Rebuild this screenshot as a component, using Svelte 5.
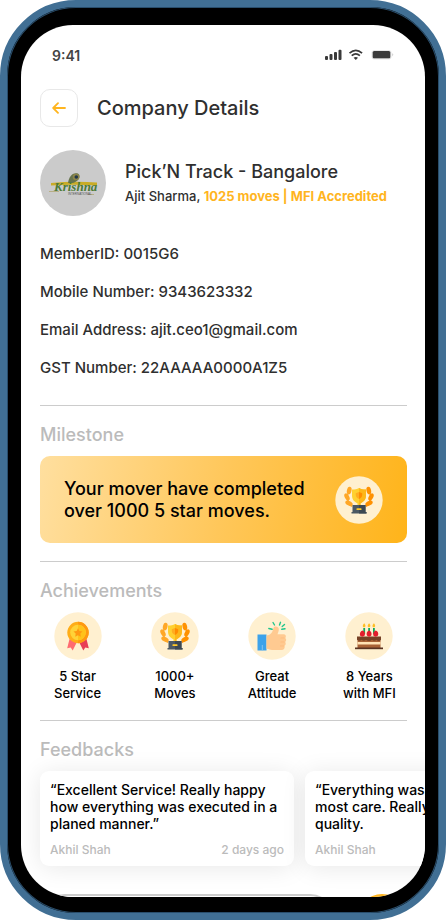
<script>
  const details = [
    ['MemberID', '0015G6'],
    ['Mobile Number', '9343623332'],
    ['Email Address', 'ajit.ceo1@gmail.com'],
    ['GST Number', '22AAAAA0000A1Z5']
  ];
  const achievements = [
    { icon: 'medal', top: '5 Star', bottom: 'Service' },
    { icon: 'trophy', top: '1000+', bottom: 'Moves' },
    { icon: 'thumb', top: 'Great', bottom: 'Attitude' },
    { icon: 'cake', top: '8 Years', bottom: 'with MFI' }
  ];
  const feedbacks = [
    { lines: ['“Excellent Service! Really happy', 'how everything was executed in a', 'planed manner.”'], author: 'Akhil Shah', when: '2 days ago' },
    { lines: ['“Everything was', 'most care. Really', 'quality.'], author: 'Akhil Shah', when: '' }
  ];
</script>

{#snippet picture(name)}
  <svg class="picture" viewBox="0 0 48 48" aria-hidden="true">
    <circle cx="24" cy="24" r="23.700" fill="#fff0d0" />
    {#if name === 'trophy'}
      <path d="M17 30.500C12 27 11 20 14.500 14" fill="none" stroke="#ffa726" stroke-width="1.400" />
      <ellipse cx="14.200" cy="14.500" rx="2.300" ry="3.900" transform="rotate(12 14.200 14.500)" fill="#ffa726" />
      <ellipse cx="12" cy="21" rx="2.200" ry="3.900" transform="rotate(-28 12 21)" fill="#ffa726" />
      <ellipse cx="14" cy="27.300" rx="2.200" ry="4" transform="rotate(-62 14 27.300)" fill="#ffa726" />
      <path d="M31 30.500C36 27 37 20 33.500 14" fill="none" stroke="#ff9100" stroke-width="1.400" />
      <ellipse cx="33.800" cy="14.500" rx="2.300" ry="3.900" transform="rotate(-12 33.800 14.500)" fill="#ff9100" />
      <ellipse cx="36" cy="21" rx="2.200" ry="3.900" transform="rotate(28 36 21)" fill="#ff9100" />
      <ellipse cx="34" cy="27.300" rx="2.200" ry="4" transform="rotate(62 34 27.300)" fill="#ff9100" />
      <path d="M17 13.500c3 0 5-.3 7-1.500 2 1.200 4 1.500 7 1.500v6c0 4-2.500 6.500-5.500 7.700V30h-3v-2.800C19.500 26 17 23.500 17 19.500z" fill="#ffd02f" />
      <path d="M24 12c2 1.200 4 1.500 7 1.500v6c0 4-2.500 6.500-5.500 7.700V30H24z" fill="#fdb71a" />
      <path d="M20.800 17.200 24 16v7c-2-.8-3.200-2.300-3.200-4z" fill="#ffad20" />
      <path d="M24 16l3.200 1.200V19c0 1.700-1.200 3.200-3.200 4z" fill="#ff8c00" />
      <path d="M17.500 29h13v7.500h-13zM16.500 36h15v1.500h-15z" fill="#4c5963" />
      <path d="M24 29h6.500v7h1v1.500H24z" fill="#3c4852" />
      <rect x="21.500" y="32.300" width="5" height="1.600" rx=".5" fill="#ffc928" />
    {:else if name === 'medal'}
      <path d="M15.500 27l-2.300 9.300 3.500-.8 2 3 4.500-9z" fill="#ff6b70" />
      <path d="M32.500 27l2.300 9.300-3.500-.8-2 3-4.500-9z" fill="#e83e55" />
      <circle cx="24" cy="20.500" r="10.700" fill="#ffad18" />
      <path d="M24 9.800a10.700 10.700 0 0 1 0 21.400z" fill="#ff9811" />
      <circle cx="24" cy="20.500" r="7.800" fill="#ffd238" />
      <path d="M24 12.700a7.800 7.800 0 0 1 0 15.600z" fill="#ffc21a" />
      <path d="M24 16.200l1.400 2.800 3.100.4-2.200 2.200.5 3.100-2.800-1.500-2.800 1.500.5-3.100-2.200-2.200 3.100-.4z" fill="#ff9811" />
    {:else if name === 'thumb'}
      <path d="M9.500 22.500h9V38.500h-9z" fill="#3da2ea" />
      <path d="M13.800 33h1v5.500h-1z" fill="#85c5f2" />
      <path d="M18.500 23.500c3.500-.5 5.500-2 6.500-6l.6-1.800c.7-2 5.200-1.500 5.200 1.300 0 2-.6 3.600-1.300 5.200h6c2.300 0 3 2.300 1.800 3.800 1.300 1.200 1.100 3-.1 4 .9 1.300.7 2.800-.6 3.700.6 2.200-.7 4.300-3.100 4.300H24c-2 0-3-1.300-5.500-1.300z" fill="#ffca91" />
      <path d="M32.500 26h4M32.500 30h4M32 34h4" stroke="#fdb978" stroke-width=".7" />
      <path d="M25 10.500l1.500 2.500M32.500 10.300l-1 2.700M20.800 16.500l3.300.8M36.500 12.500l-2.300 2M33.800 17.300l3.200-.5" stroke="#20c58b" stroke-width="1.400" stroke-linecap="round" />
    {:else}
      <path d="M12.500 25h23v11h-23z" fill="#a86135" />
      <path d="M12.500 30h23v2.500h-23z" fill="#ffe2b5" />
      <path d="M12 24.500h24v3.200c-1.500 1.800-3 1.800-4.500 0-1.500 1.500-3 1.500-4.500 0-2 1.600-4 1.600-6 0-1.500 1.500-3 1.500-4.500 0-1.500 1.500-3 1.300-4.500 0z" fill="#764125" />
      <path d="M10 35.500h28v1.700H10z" fill="#593322" />
      <path d="M18.300 16h1.800v6h-1.800zM23.200 16H25v6h-1.800zM28 16h1.800v6H28z" fill="#10a85b" />
      <path d="M19.200 11.200c2 2.200 1.500 4-.1 4s-1.900-1.800.1-4zM24.100 11.200c2 2.200 1.500 4-.1 4s-1.900-1.800.1-4zM28.900 11.200c2 2.200 1.500 4-.1 4s-1.900-1.800.1-4z" fill="#ffbe24" />
      <path d="M17.500 18.500c2.200.5 3 3 2.200 5-1.200 1.500-3.500 1.500-4.700 0-.5-2 .3-4.500 2.500-5zM24.100 18.500c2.200.5 3 3 2.200 5-1.200 1.500-3.200 1.500-4.400 0-.8-2 0-4.500 2.200-5zM30.800 18.500c2.200.5 3 3 2.200 5-1.200 1.500-3.500 1.500-4.700 0-.5-2 .3-4.500 2.500-5z" fill="#e21d2c" />
    {/if}
  </svg>
{/snippet}

<div class="phone">
  <main class="screen">
    <div class="status">
      <span>9:41</span>
      <svg width="70" height="12" viewBox="0 0 70 12" aria-label="Signal, Wi-Fi and battery">
        <g fill="#3a3a3a">
          <rect x="0" y="7" width="3" height="4" rx="1" /><rect x="4.500" y="5" width="3" height="6" rx="1" />
          <rect x="9" y="3" width="3" height="8" rx="1" /><rect x="13.500" y=".7" width="3" height="10.300" rx="1" />
          <rect x="47.500" y="2" width="18" height="7.500" rx="1.500" />
          <path d="M28.600 8.700q2.200-1.600 4.400 0L30.800 11z" />
        </g>
        <path d="M24.500 4.200q6.300-5.600 12.600 0M26.700 6.700q4.100-3.500 8.200 0" fill="none" stroke="#3a3a3a" stroke-width="1.700" />
        <rect x="47" y="1.500" width="19" height="8.500" rx="2" fill="none" stroke="#ddd" stroke-width=".7" />
        <path d="M67.500 4v3.500q1.500-1.700 0-3.500" fill="#aaa" />
      </svg>
    </div>

    <header>
      <button class="back" aria-label="Back">
        <svg width="14" height="12" viewBox="0 0 14 12" fill="none" stroke="#ffb51f" stroke-width="1.800" stroke-linecap="round" stroke-linejoin="round"><path d="M13 6H1.500M6 1.200 1.200 6 6 10.800" /></svg>
      </button>
      <h1>Company Details</h1>
    </header>

    <section class="company">
      <svg class="avatar" viewBox="0 0 66 66" role="img" aria-label="Krishna International">
        <circle cx="33" cy="33" r="33" fill="#cbcbcb" />
        <path d="M11 33q22-2 46-.5v3q-23-1.500-46 0z" fill="#c9ac27" />
        <path d="M28 33C29 27 32 22 38 23.500c4 3 0 8-5 9.500z" fill="#66734c" />
        <circle cx="36" cy="27" r="3.300" fill="#8c8449" /><circle cx="36.300" cy="27" r="1.800" fill="#20364b" />
        <text x="14" y="41" font-family="Liberation Serif, serif" font-size="13" font-style="italic" font-weight="700" fill="#4c7a35">Krishna</text>
        <path d="M9 41.500h10M48 44.500h6" stroke="#a99b55" stroke-width=".6" />
        <text x="28" y="45" font-family="Liberation Sans, sans-serif" font-size="3" fill="#555">INTERNATIONAL</text>
      </svg>
      <div>
        <h2>Pick’N Track - Bangalore</h2>
        <p>Ajit Sharma, <strong>1025 moves | MFI Accredited</strong></p>
      </div>
    </section>

    <ul class="details">
      {#each details as [label, value]}<li>{label}: {value}</li>{/each}
    </ul>

    <section class="block">
      <h3>Milestone</h3>
      <div class="milestone">
        <p>Your mover have completed<br />over 1000 5 star moves.</p>
        {@render picture('trophy')}
      </div>
    </section>

    <section class="block">
      <h3>Achievements</h3>
      <ul class="achievements">
        {#each achievements as item}
          <li>{@render picture(item.icon)}<span>{item.top}<br />{item.bottom}</span></li>
        {/each}
      </ul>
    </section>

    <section class="block">
      <h3>Feedbacks</h3>
      <div class="feedbacks">
        {#each feedbacks as item}
          <article>
            <p>{#each item.lines as line}<span>{line}</span>{/each}</p>
            <footer><span>{item.author}</span><span>{item.when}</span></footer>
          </article>
        {/each}
      </div>
    </section>

    <form class="compose">
      <input type="text" aria-label="Write a feedback" />
      <button type="button" aria-label="Send"></button>
    </form>
  </main>
</div>

<style>
  :global(body) { background: #fff; }
  .phone {
    box-sizing: border-box;
    height: 100vh;
    margin-right: 1px;
    padding: 18px 14px 16px;
    border: 7px solid #416f94;
    border-radius: 76px;
    background: #000;
    box-shadow: inset 0 0 0 1px #294d6b;
    font-family: Inter, "Noto Sans", sans-serif;
    font-weight: 500;
    color: #2f2f2f;
  }
  .screen {
    box-sizing: border-box;
    height: 100%;
    overflow: hidden;
    padding: 20px 18px 0 19px;
    border-radius: 52px;
    background: #fff;
  }
  h1, h2, h3, p, ul { margin: 0; padding: 0; font-weight: 500; }
  ul { list-style: none; }
  .status {
    display: flex;
    justify-content: space-between;
    align-items: center;
    height: 20px;
    padding: 0 12px;
    font-size: 14px;
    font-weight: 600;
    color: #444;
  }
  header { display: flex; align-items: center; gap: 19px; margin-top: 24px; }
  .back {
    display: grid;
    place-items: center;
    width: 38px;
    height: 38px;
    padding: 0;
    border: 1px solid #e8e8e8;
    border-radius: 10px;
    background: #fff;
  }
  h1 { font-size: 20px; line-height: 24px; }
  .company { display: flex; align-items: center; gap: 19px; margin-top: 23px; }
  .avatar { flex: none; width: 66px; height: 66px; }
  .company > div { white-space: nowrap; }
  h2 { font-size: 18px; line-height: 26px; }
  .company p { font-size: 13px; line-height: 22px; }
  strong { font-weight: 700; color: #ffb51f; }
  .details { display: grid; gap: 16px; margin-top: 27px; padding-bottom: 26px; font-size: 15px; line-height: 22px; }
  .block { padding-bottom: 18px; border-top: 1px solid #ccc; }
  h3 { padding: 17px 0 9px; font-size: 18px; line-height: 24px; color: #bbb; }
  .milestone {
    display: flex;
    align-items: center;
    justify-content: space-between;
    height: 87px;
    box-sizing: border-box;
    padding: 0 24px;
    border-radius: 10px;
    background: linear-gradient(100deg, #ffdf9f, #ffc75a 50%, #ffb41a);
    font-size: 18px;
    line-height: 22px;
    color: #000;
    white-space: nowrap;
  }
  .picture { display: block; flex: none; width: 48px; height: 48px; }
  .achievements { display: grid; grid-template-columns: repeat(4, 1fr); margin: 0 -11px; }
  .achievements li { display: grid; justify-items: center; gap: 8px; font-size: 13px; line-height: 17px; text-align: center; color: #000; }
  .feedbacks { display: flex; gap: 11px; margin-right: -18px; }
  article {
    flex: none;
    box-sizing: border-box;
    width: 254px;
    padding: 10px 10px 8px;
    border-radius: 9px;
    background: #fff;
    box-shadow: 0 2px 24px #00000018;
    white-space: nowrap;
  }
  article p { font-size: 14px; line-height: 17px; color: #000; }
  article p span { display: block; }
  footer { display: flex; justify-content: space-between; margin-top: 9px; font-size: 12px; line-height: 17px; color: #bbb; }
  .compose { display: flex; justify-content: space-between; margin-top: 10px; }
  .compose input { flex: 1; min-width: 0; height: 50px; margin-right: 22px; box-sizing: border-box; border: 2px solid #ccc; border-radius: 25px; }
  .compose button { width: 50px; height: 50px; border: 0; border-radius: 50%; background: #ffb51f; }
</style>
